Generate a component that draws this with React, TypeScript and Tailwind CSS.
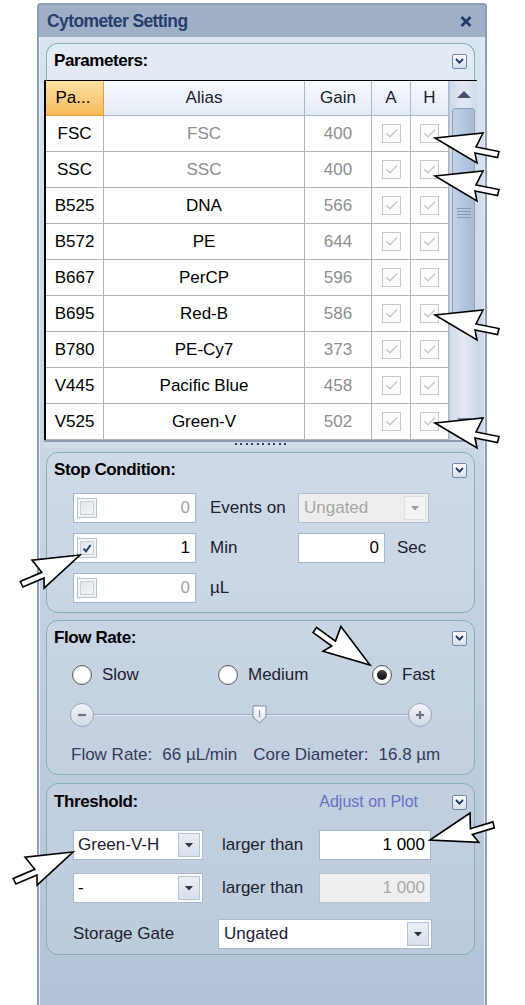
import React from "react";

const sans = "font-['Liberation_Sans',Arial,sans-serif]";

type Row = { p: string; alias: string; gain: number; dim?: boolean };

const rows: Row[] = [
  { p: "FSC", alias: "FSC", gain: 400, dim: true },
  { p: "SSC", alias: "SSC", gain: 400, dim: true },
  { p: "B525", alias: "DNA", gain: 566 },
  { p: "B572", alias: "PE", gain: 644 },
  { p: "B667", alias: "PerCP", gain: 596 },
  { p: "B695", alias: "Red-B", gain: 586 },
  { p: "B780", alias: "PE-Cy7", gain: 373 },
  { p: "V445", alias: "Pacific Blue", gain: 458 },
  { p: "V525", alias: "Green-V", gain: 502 },
];

// annotation cursor arrows drawn over the panel
const ARROW = "0,0 48,-5 41,9 64,13.5 62.5,19.5 40,15 42,25";
const arrows = [
  "translate(435 138)",
  "translate(435 176)",
  "translate(435 315)",
  "translate(435 423)",
  "translate(80 555) rotate(-12) scale(-1 1)",
  "translate(370 665) rotate(47) scale(-1 1)",
  "translate(73 852) rotate(-12) scale(-1 1)",
  "translate(430 840) rotate(-28)",
];

function CollapseBtn() {
  return (
    <div className="flex h-[15px] w-[15px] items-center justify-center rounded-[2px] border border-[#7487a5] bg-gradient-to-b from-white to-[#d3deeb]">
      <svg width="9" height="6" viewBox="0 0 9 6">
        <path d="M1 1 L4.5 4.6 L8 1" fill="none" stroke="#1d3362" strokeWidth="1.8" />
      </svg>
    </div>
  );
}

function GroupHead({ title, right, pt }: { title: string; right?: React.ReactNode; pt: string }) {
  return (
    <div className={`flex items-center px-[7px] ${pt}`}>
      <span className="h-[20px] text-[17px] font-bold leading-[20px] tracking-[-0.4px] text-black">{title}</span>
      <div className="ml-auto flex items-center">
        {right}
        <CollapseBtn />
      </div>
    </div>
  );
}

function GridCheck() {
  return (
    <div className="flex h-[19px] w-[19px] items-center justify-center border border-[#c9c9c9] bg-[#fcfcfc]">
      <svg width="13" height="11" viewBox="0 0 13 11">
        <path d="M1.2 5.2 L5 8.8 L12 1.6" fill="none" stroke="#c4c4c4" strokeWidth="1.3" />
      </svg>
    </div>
  );
}

function SmallCheck({ checked }: { checked?: boolean }) {
  return (
    <div className="flex h-[20px] w-[20px] items-center justify-center border border-[#b3c1d4] bg-[#f2f4f7]">
      <div className="flex h-[14px] w-[14px] items-center justify-center border border-[#c7ccd5] bg-gradient-to-br from-[#e1e4e9] to-[#f7f7f8]">
        {checked && (
          <svg width="10" height="9" viewBox="0 0 10 9">
            <path d="M1.5 4.6 L4 7.4 L8.6 1" fill="none" stroke="#24407a" strokeWidth="2" />
          </svg>
        )}
      </div>
    </div>
  );
}

function Tri({ color }: { color: string }) {
  return (
    <svg width="8" height="5" viewBox="0 0 8 5">
      <polygon points="0,0 8,0 4,4.5" fill={color} />
    </svg>
  );
}

function DropBtn({ disabled }: { disabled?: boolean }) {
  return (
    <div
      className={`flex h-[24px] w-[22px] items-center justify-center border ${
        disabled ? "border-[#dedede] bg-[#f4f4f4]" : "border-[#b3c2d7] bg-gradient-to-b from-[#e9eff6] to-[#d6e0ec]"
      }`}
    >
      <Tri color={disabled ? "#9a9a9a" : "#333333"} />
    </div>
  );
}

function Radio({ on }: { on?: boolean }) {
  return (
    <div className="flex h-[20px] w-[20px] items-center justify-center rounded-full border-[1.5px] border-[#5c5c5c] bg-white shadow-[inset_0_0_0_1px_#e8e8e8]">
      {on && <div className="h-[10px] w-[10px] rounded-full bg-gradient-to-b from-[#444] to-[#111]" />}
    </div>
  );
}

function RoundBtn({ plus }: { plus?: boolean }) {
  return (
    <div className="flex h-[24px] w-[24px] items-center justify-center rounded-full border border-[#9aa7b9] bg-gradient-to-b from-[#f2f5f8] to-[#d0d9e4]">
      <svg width="10" height="10" viewBox="0 0 10 10">
        <path d="M1 5 H9" stroke="#6c7585" strokeWidth="2.2" />
        {plus && <path d="M5 1 V9" stroke="#6c7585" strokeWidth="2.2" />}
      </svg>
    </div>
  );
}

const txt = "text-[17px] leading-[20px]";

export default function App() {
  return (
    <div className={`relative h-[1005px] w-[525px] overflow-hidden bg-white ${sans}`}>
      <div className="ml-[37px] mt-[3px] flex h-[1002px] w-[450px] flex-col rounded-t-[4px] border-2 border-b-0 border-[#8b9eba] bg-gradient-to-b from-[#dbe5f1] to-[#b3c3d7] shadow-[inset_1px_1px_0_#eef3f9,inset_-1px_0_0_#e2e9f2]">
        {/* title bar */}
        <div className="flex h-[32px] items-center justify-between bg-[#9fb0c6] pl-[8px] pr-[13px]">
          <span className="text-[17.5px] font-bold tracking-[-0.6px] text-[#283d6d]">Cytometer Setting</span>
          <svg width="12" height="11" viewBox="0 0 12 11">
            <path d="M1.5 1 L10.5 10 M10.5 1 L1.5 10" stroke="#233a6a" strokeWidth="2.6" />
          </svg>
        </div>

        {/* parameters */}
        <div className="ml-[7px] mt-[6px] h-[37px] w-[429px] rounded-t-[12px] border border-b-0 border-[#82b2b0] bg-[#e1eaf5]">
          <GroupHead title="Parameters:" pt="pt-[7px]" />
        </div>
        <div className="ml-[5px] flex w-[433px] border-t border-black">
          <div className="w-[405px] border-l-2 border-black">
            <div className="grid h-[35px] grid-cols-[58px_201px_67px_39px_38px] text-[17px] text-[#1b2130]">
              <div className="flex items-center justify-center border-b border-r border-[#e39f42] bg-gradient-to-b from-[#fde1a4] to-[#f6ba58] pr-[3px] text-black">
                Pa...
              </div>
              {["Alias", "Gain", "A", "H"].map((h) => (
                <div
                  key={h}
                  className="flex items-center justify-center border-b border-r border-[#a9bbd3] bg-gradient-to-b from-[#f7f9fc] to-[#e4ecf6]"
                >
                  {h}
                </div>
              ))}
            </div>
            {rows.map((r) => (
              <div
                key={r.p}
                className="grid h-[36px] grid-cols-[58px_201px_67px_39px_38px] bg-white text-[17px]"
              >
                <div className="flex items-center justify-center border-b border-r border-[#b4b4b4] text-black">{r.p}</div>
                <div
                  className={`flex items-center justify-center border-b border-r border-[#b4b4b4] ${
                    r.dim ? "text-[#8e8e8e]" : "text-black"
                  }`}
                >
                  {r.alias}
                </div>
                <div className="flex items-center justify-center border-b border-r border-[#b4b4b4] text-[#8e8e8e]">
                  {r.gain}
                </div>
                <div className="flex items-center justify-center border-b border-r border-[#b4b4b4]">
                  <GridCheck />
                </div>
                <div className="flex items-center justify-center border-b border-r border-[#b4b4b4]">
                  <GridCheck />
                </div>
              </div>
            ))}
          </div>
          {/* scrollbar */}
          <div className="flex w-[28px] flex-col border-l border-[#b9c7d9] bg-gradient-to-r from-[#d0dbe9] via-[#e2e9f2] to-[#d0dbe9]">
            <div className="flex h-[27px] items-center justify-center">
              <svg width="14" height="7" viewBox="0 0 14 7">
                <polygon points="0,7 7,0 14,7" fill="#44526d" />
              </svg>
            </div>
            <div className="mx-[2px] flex h-[210px] items-center justify-center rounded-[3px] border border-[#8da2bf] bg-gradient-to-r from-[#c2d2e6] to-[#a8bbd5]">
              <div className="flex w-[14px] flex-col gap-[2px]">
                {[0, 1, 2, 3].map((i) => (
                  <div key={i} className="h-px bg-[#8797ae]" />
                ))}
              </div>
            </div>
            <div className="flex-1" />
            <div className="flex h-[22px] items-start justify-center">
              <svg width="14" height="7" viewBox="0 0 14 7">
                <polygon points="0,0 14,0 7,7" fill="#6f7fa6" />
              </svg>
            </div>
          </div>
        </div>
        {/* splitter */}
        <div className="ml-[5px] flex h-[8px] w-[433px] justify-center border-t-2 border-[#8c9bb1] bg-[#d3dde9] pt-[1px]">
          <div className="flex gap-[3.5px]">
            {Array.from({ length: 10 }).map((_, i) => (
              <div key={i} className="h-[2px] w-[2px] bg-[#2c3f6c]" />
            ))}
          </div>
        </div>

        {/* stop condition */}
        <div className="ml-[7px] mt-[4px] h-[161px] w-[429px] rounded-[12px] border border-[#82b2b0] bg-white/10">
          <GroupHead title="Stop Condition:" pt="pt-[7px]" />
          <div className={`mt-[13px] flex flex-col gap-[10px] pl-[26px] ${txt}`}>
            <div className="flex items-center">
              <div className="flex h-[30px] w-[123px] items-center border border-[#a3b4cb] bg-white pl-[3px] pr-[5px]">
                <SmallCheck />
                <span className="ml-auto text-[#a4a4a4]">0</span>
              </div>
              <span className="w-[102px] pl-[14px] text-[#1c2130]">Events on</span>
              <div className="flex h-[30px] w-[131px] items-center border border-[#b1bfd2] bg-[#eeeeee] pl-[5px] pr-[2px]">
                <span className="text-[#a6a6a6]">Ungated</span>
                <div className="ml-auto">
                  <DropBtn disabled />
                </div>
              </div>
            </div>
            <div className="flex items-center">
              <div className="flex h-[30px] w-[123px] items-center border border-[#a3b4cb] bg-white pl-[3px] pr-[5px]">
                <SmallCheck checked />
                <span className="ml-auto text-black">1</span>
              </div>
              <span className="w-[102px] pl-[14px] text-[#1c2130]">Min</span>
              <div className="flex h-[30px] w-[87px] items-center justify-end border border-[#a3b4cb] bg-white pr-[5px] text-black">
                0
              </div>
              <span className="pl-[12px] text-[#1c2130]">Sec</span>
            </div>
            <div className="flex items-center">
              <div className="flex h-[30px] w-[123px] items-center border border-[#a3b4cb] bg-white pl-[3px] pr-[5px]">
                <SmallCheck />
                <span className="ml-auto text-[#a4a4a4]">0</span>
              </div>
              <span className="w-[102px] pl-[14px] text-[#1c2130]">µL</span>
            </div>
          </div>
        </div>

        {/* flow rate */}
        <div className="ml-[7px] mt-[7px] h-[155px] w-[429px] rounded-[12px] border border-[#82b2b0] bg-white/10">
          <GroupHead title="Flow Rate:" pt="pt-[7px]" />
          <div className={`mt-[17px] flex h-[20px] items-center pl-[25px] text-[#1c2130] ${txt}`}>
            <div className="flex w-[146px] items-center gap-[10px]">
              <Radio />
              <span>Slow</span>
            </div>
            <div className="flex w-[154px] items-center gap-[10px]">
              <Radio />
              <span>Medium</span>
            </div>
            <div className="flex items-center gap-[10px]">
              <Radio on />
              <span>Fast</span>
            </div>
          </div>
          <div className="mt-[18px] flex h-[24px] items-center pl-[23px]">
            <RoundBtn />
            <div className="relative flex h-[24px] w-[314px] items-center">
              <div className="h-[2px] w-full border-b border-[#e4eaf2] bg-[#97aac3]" />
              <svg className="absolute left-[158px] top-[2px]" width="15" height="19" viewBox="0 0 15 19">
                <defs>
                  <linearGradient id="th" x1="0" y1="0" x2="0" y2="1">
                    <stop offset="0" stopColor="#ffffff" />
                    <stop offset="1" stopColor="#d9e0e9" />
                  </linearGradient>
                </defs>
                <path d="M1 1 H14 V12 L7.5 18 L1 12 Z" fill="url(#th)" stroke="#7f8b9c" strokeWidth="1" />
                <path d="M7.5 5 V12" stroke="#8793a4" strokeWidth="1.2" />
              </svg>
            </div>
            <RoundBtn plus />
          </div>
          <div className={`mt-[18px] flex pl-[24px] text-[#343b5c] ${txt}`}>
            <span>Flow Rate:</span>
            <span className="ml-[10px]">66 µL/min</span>
            <span className="ml-[16px]">Core Diameter:</span>
            <span className="ml-[10px]">16.8 µm</span>
          </div>
        </div>

        {/* threshold */}
        <div className="ml-[7px] mt-[8px] h-[172px] w-[429px] rounded-[12px] border border-[#82b2b0] bg-white/10">
          <GroupHead
            title="Threshold:"
            pt="pt-[6px]"
            right={<span className="mr-[34px] text-[16px] text-[#6a6fc4]">Adjust on Plot</span>}
          />
          <div className={`mt-[16px] flex items-center pl-[26px] ${txt}`}>
            <div className="flex h-[30px] w-[130px] items-center border border-[#a9b9cf] bg-white pl-[4px] pr-[2px]">
              <span className="text-[#1f1a33]">Green-V-H</span>
              <div className="ml-auto">
                <DropBtn />
              </div>
            </div>
            <span className="w-[116px] pl-[19px] text-[#1c2130]">larger than</span>
            <div className="flex h-[30px] w-[112px] items-center justify-end border border-[#a3b4cb] bg-white pr-[5px] text-black">
              1 000
            </div>
          </div>
          <div className={`mt-[13px] flex items-center pl-[26px] ${txt}`}>
            <div className="flex h-[30px] w-[130px] items-center border border-[#a9b9cf] bg-white pl-[4px] pr-[2px]">
              <span className="text-black">-</span>
              <div className="ml-auto">
                <DropBtn />
              </div>
            </div>
            <span className="w-[116px] pl-[19px] text-[#1c2130]">larger than</span>
            <div className="flex h-[30px] w-[112px] items-center justify-end border border-[#b7c4d5] bg-[#efefef] pr-[5px] text-[#a8a8a8]">
              1 000
            </div>
          </div>
          <div className={`mt-[16px] flex items-center pl-[26px] ${txt}`}>
            <span className="w-[145px] text-[#1c2130]">Storage Gate</span>
            <div className="flex h-[30px] w-[214px] items-center border border-[#a9b9cf] bg-white pl-[5px] pr-[2px]">
              <span className="text-[#221b38]">Ungated</span>
              <div className="ml-auto">
                <DropBtn />
              </div>
            </div>
          </div>
        </div>
      </div>

      <svg className="pointer-events-none absolute left-0 top-0" width="525" height="1005" viewBox="0 0 525 1005">
        {arrows.map((t, i) => (
          <polygon key={i} points={ARROW} transform={t} fill="white" stroke="black" strokeWidth="1.6" strokeLinejoin="miter" />
        ))}
      </svg>
    </div>
  );
}
